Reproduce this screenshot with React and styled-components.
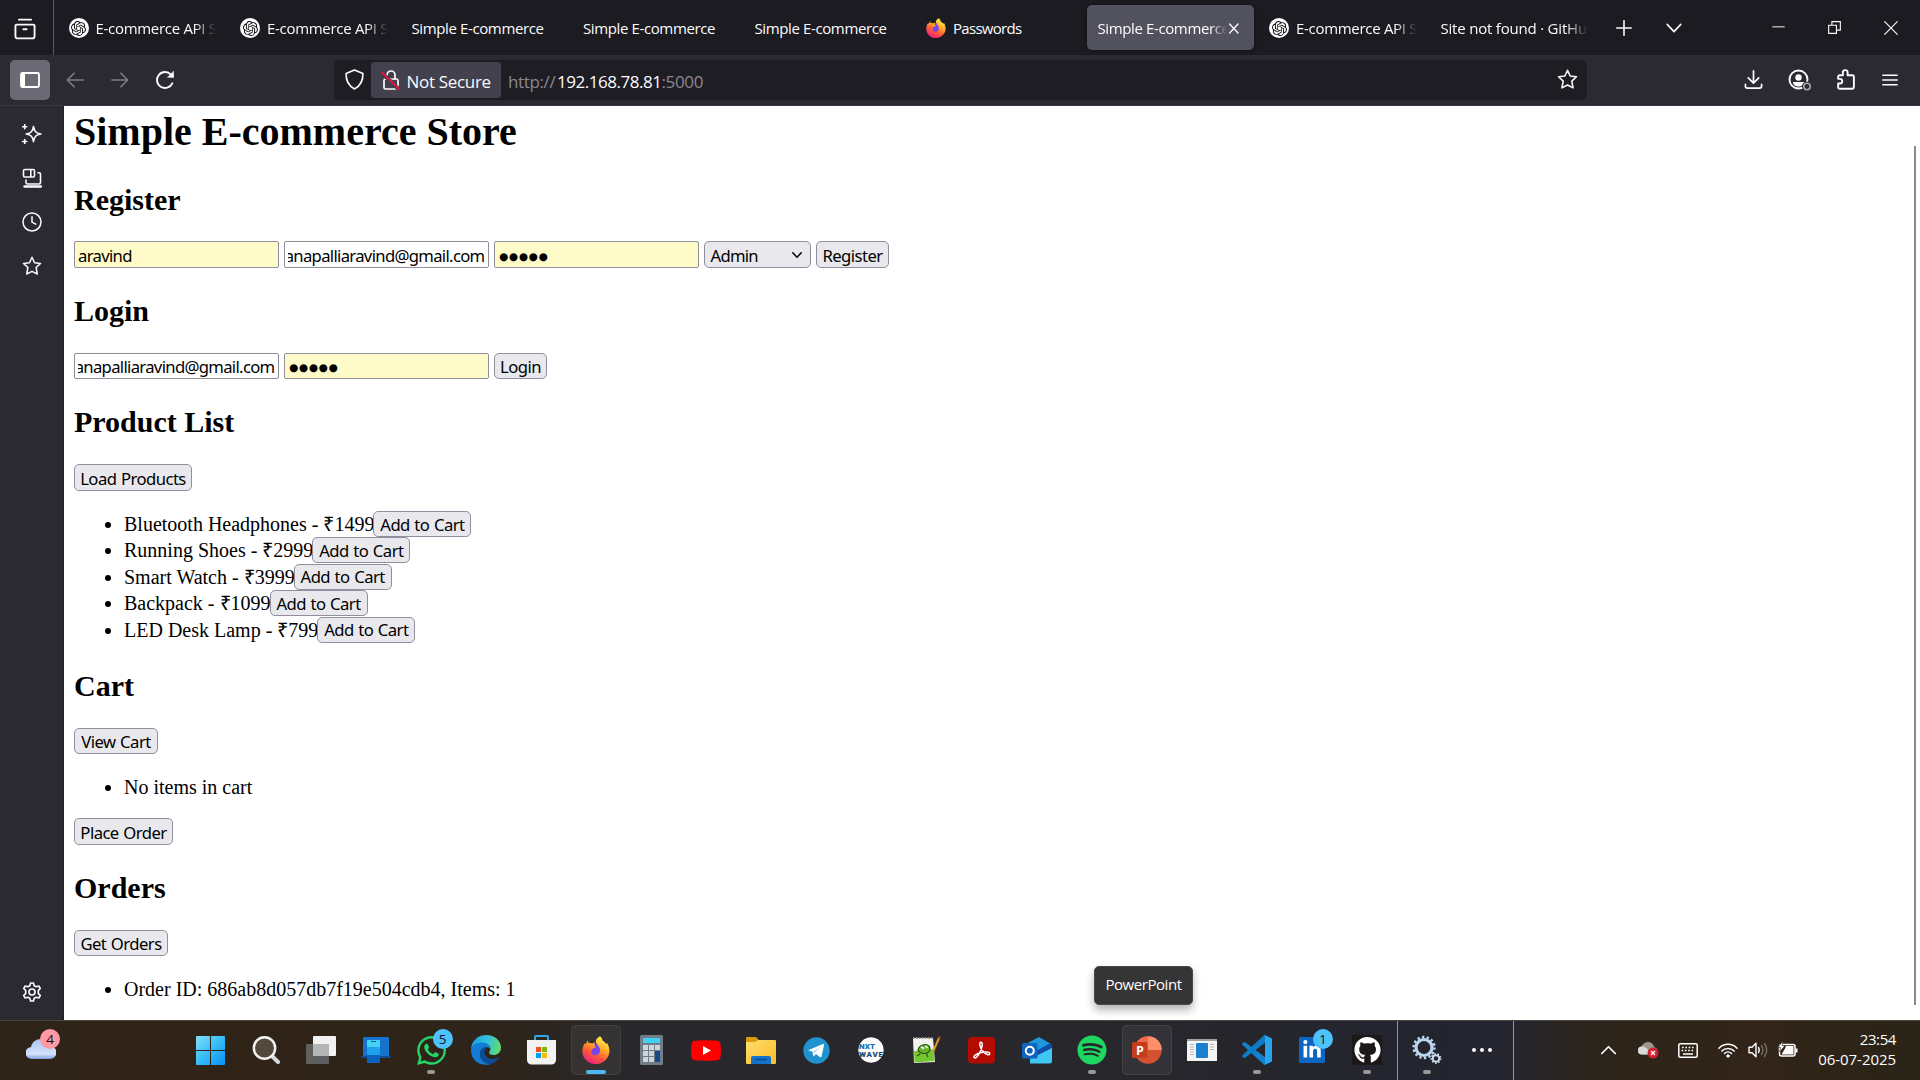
import React from "react";
import styled, { createGlobalStyle, css } from "styled-components";
import { SiOpenai } from "react-icons/si";
import { FaWhatsapp, FaSpotify, FaGithub, FaLinkedinIn } from "react-icons/fa6";

const ui = `"Open Sans", "Noto Sans", sans-serif`;
const control = `"Noto Sans", "Open Sans", sans-serif`;

const GlobalStyle = createGlobalStyle`
  * { box-sizing: border-box; }
  html, body { margin: 0; padding: 0; overflow: hidden; background: #fff; }
  svg { display: block; flex: none; }
`;

const Screen = styled.div`
  width: 1920px;
  height: 1080px;
  display: flex;
  flex-direction: column;
  overflow: hidden;
`;

/* ---------- tab strip ---------- */
const TabStrip = styled.header`
  height: 55px;
  display: flex;
  background: #1c1b22;
  color: #fbfbfe;
  font-family: ${ui};
`;
const FirefoxView = styled.div`
  width: 54px;
  display: grid;
  place-items: center;
  padding: 2px 4px 0 0;
  border-right: 1px solid #5b5a63;
  margin-right: 1.5px;
`;
const TabSlot = styled.div`
  width: 171.5px;
  padding: 5px 2px;
`;
const TabBody = styled.div`
  height: 45px;
  display: flex;
  align-items: center;
  gap: ${(p) => (p.$active ? 0 : 7)}px;
  padding: 1px ${(p) => (p.$active ? 14 : 9)}px 0 11px;
  border-radius: 5px;
  ${(p) => p.$active && css`
    background: #52525e;
    box-shadow: 0 0 4px rgba(0, 0, 0, 0.5);
  `}
`;
const TabTitle = styled.span`
  flex: 1;
  min-width: 0;
  overflow: hidden;
  white-space: nowrap;
  font-size: 15px;
  line-height: 22px;
  letter-spacing: ${(p) => p.$track || "-0.38px"};
  ${(p) => p.$fade && css`
    mask-image: linear-gradient(to right, #000 calc(100% - ${p.$fade}px), transparent);
  `}
`;
const GptBadge = styled.span`
  width: 20px;
  height: 20px;
  flex: none;
  border-radius: 50%;
  display: grid;
  place-items: center;
  background: #fff;
  color: #111;
`;
const StripButton = styled.div`
  width: ${(p) => p.$w}px;
  margin-left: ${(p) => p.$gap || 0}px;
  display: grid;
  place-items: center;
`;

/* ---------- toolbar ---------- */
const Toolbar = styled.nav`
  height: 51px;
  display: flex;
  align-items: center;
  padding: 0 8px 1px 10px;
  background: #2b2a33;
  color: #fbfbfe;
  font-family: ${ui};
  border-bottom: 1px solid #38373f;
`;
const SidebarToggle = styled.div`
  width: 40px;
  height: 40px;
  border-radius: 5px;
  background: #6b6a74;
  display: grid;
  place-items: center;
  margin-right: 2.5px;
`;
const ToolButton = styled.div`
  width: ${(p) => p.$w || 45}px;
  display: grid;
  place-items: center;
  color: ${(p) => (p.$dim ? "#7f7e86" : "#fbfbfe")};
`;
const AddressBar = styled.div`
  width: 1253px;
  height: 40px;
  margin: 0 auto 0 146.5px;
  border-radius: 5px;
  background: #1e1d24;
  display: flex;
  align-items: center;
  padding: 0 9.5px 0 9.5px;
`;
const Security = styled.div`
  width: 130px;
  height: 36px;
  margin: 0 7.5px 0 6px;
  padding: 0 0 0 10px;
  border-radius: 4px;
  background: #42414d;
  display: flex;
  align-items: center;
  gap: 6px;
  font-size: 17px;
  white-space: nowrap;
  letter-spacing: -0.32px;
`;
const SecurityText = styled.span`
  padding-top: 4px;
`;
const Url = styled.span`
  flex: 1;
  padding-top: 3px;
  font-size: 17px;
  letter-spacing: -0.36px;
  color: #8a8991;
  b { font-weight: 400; color: #fbfbfe; margin-left: 1.500px; letter-spacing: -0.46px; }
`;

/* ---------- body ---------- */
const Middle = styled.div`
  height: 914px;
  display: flex;
`;
const Sidebar = styled.aside`
  width: 64px;
  background: #2b2a33;
  border-right: 1px solid #211f26;
  display: flex;
  flex-direction: column;
  align-items: center;
  padding: 6px 0 6px 1px;
  color: #fbfbfe;
`;
const SideItem = styled.div`
  height: 44px;
  width: 44px;
  display: grid;
  place-items: center;
  ${(p) => p.$last && "margin-top: auto;"}
`;
const Page = styled.main`
  flex: 1;
  background: #fff;
  color: #000;
  padding: 3px 0 0 10px;
  font-family: "Liberation Serif", serif;
  font-size: 20px;
`;
const ScrollTrack = styled.div`
  width: 6px;
  background: #fff;
  padding-top: 40px;
`;
const ScrollThumb = styled.div`
  width: 2px;
  height: 859px;
  background: #8a8a8a;
`;
const Title = styled.h1`
  margin: 0 0 29px;
  font-size: 40px;
  line-height: 45px;
`;
const Section = styled.section`
  height: ${(p) => p.$h}px;
`;
const Heading = styled.h2`
  margin: 0 0 ${(p) => p.$mb || 25}px;
  font-size: 30px;
  line-height: 34px;
`;
const Row = styled.div`
  display: flex;
  gap: 5px;
  height: ${(p) => p.$h || 26}px;
  margin-top: ${(p) => p.$mt || 0}px;
`;
const Field = styled.div`
  width: 205px;
  border: 1px solid #8f8f9d;
  border-radius: 2px;
  background: ${(p) => (p.$filled ? "#fffbc8" : "#fff")};
  padding: 0 3.5px 0 3px;
  display: flex;
  align-items: center;
`;
const FieldText = styled.div`
  flex: 1;
  height: 24px;
  overflow: hidden;
  display: flex;
  justify-content: ${(p) => (p.$end ? "flex-end" : "flex-start")};
  font: 16.67px/25px ${control};
  letter-spacing: -0.68px;
  white-space: nowrap;
`;
const Dots = styled.div`
  font: 10.5px/24px "DejaVu Sans", sans-serif;
  letter-spacing: 0.7px;
  padding: 2px 0 0 1px;
`;
const Button = styled.button`
  width: ${(p) => p.$w}px;
  height: ${(p) => p.$h || 26}px;
  flex: none;
  margin: 0 0 0 ${(p) => p.$ml || 0}px;
  padding: ${(p) => (p.$h === 27 ? 2 : 0.5)}px 0 0 0;
  border: 1px solid #8f8f9d;
  border-radius: 5px;
  background: #e9e9ed;
  color: #000;
  font: 16.67px/24px ${control};
  letter-spacing: -0.55px;
  word-spacing: 0.8px;
  white-space: nowrap;
  text-align: center;
`;
const Select = styled.div`
  width: 107px;
  border: 1px solid #8f8f9d;
  border-radius: 5px;
  background: #e9e9ed;
  padding: 2px 8px 0 5.5px;
  display: flex;
  align-items: center;
  justify-content: space-between;
  font: 16.67px/24px ${control};
  letter-spacing: -0.75px;
`;
const SelectArrow = styled.span`
  margin-top: -2px;
`;
const List = styled.ul`
  margin: ${(p) => p.$mt}px 0 0;
  padding: 0 0 0 50px;
`;
const Item = styled.li`
  height: 23px;
  line-height: 23px;
`;
const ProductItem = styled.li`
  height: 26.4px;
  line-height: 27.4px;
`;
const ProductLine = styled.div`
  height: 26.4px;
  display: flex;
  align-items: flex-start;
  white-space: pre;
`;

/* ---------- taskbar ---------- */
const Taskbar = styled.footer`
  position: relative;
  height: 60px;
  display: flex;
  border-top: 1px solid #4a463f;
  background: linear-gradient(to right, #2f2419 0, #302318 150px, #2f2419 480px, #2b2622 560px, #28272b 640px, #28282c 900px, #27262c 1200px, #22242f 1450px, #262630 1515px, #2a2521 1560px, #2d2419 1620px, #322418 1760px, #2b2418 1920px);
  color: #fff;
  font-family: ${ui};
`;
const Weather = styled.div`
  position: relative;
  width: 183.4px;
  padding: 18px 0 0 26px;
`;
const Slot = styled.div`
  position: relative;
  width: 55.05px;
  height: 50px;
  margin-top: 4px;
  display: grid;
  place-items: center;
  ${(p) => p.$lit && css`
    &::before {
      content: "";
      position: absolute;
      inset: 0 2.5px;
      border-radius: 5px;
      border: 1px solid rgba(255, 255, 255, 0.07);
      background: rgba(255, 255, 255, 0.06);
    }
  `}
  & > svg { position: relative; }
`;
const Running = styled.span`
  position: absolute;
  bottom: 1px;
  left: 50%;
  transform: translateX(-50%);
  width: ${(p) => (p.$focus ? 20 : 8)}px;
  height: 4px;
  border-radius: 2px;
  background: ${(p) => (p.$focus ? "#4cb8f5" : "#9a9894")};
`;
const Badge = styled.span`
  position: absolute;
  left: ${(p) => p.$x}px;
  top: ${(p) => p.$y}px;
  width: 20px;
  height: 20px;
  border-radius: 50%;
  background: ${(p) => p.$color};
  color: #111;
  font-size: 13.5px;
  line-height: 20px;
  text-align: center;
`;
const Divider = styled.div`
  width: 1px;
  background: #96969a;
  margin: 0 ${(p) => p.$mr || 0}px 0 3px;
`;
const Tray = styled.div`
  flex: 1;
  display: flex;
  align-items: center;
  padding-left: 74px;
`;
const TrayItem = styled.div`
  width: ${(p) => p.$w || 40}px;
  display: grid;
  place-items: center;
  padding-bottom: 1px;
`;
const Clock = styled.div`
  margin-left: auto;
  padding: 0 24px 3px 0;
  text-align: right;
  font-size: 15px;
  line-height: 20px;
`;
const ClockLine = styled.div`
  letter-spacing: ${(p) => p.$track};
`;
const Tooltip = styled.div`
  position: absolute;
  left: 1094px;
  top: -55px;
  width: 99px;
  height: 39px;
  border-radius: 5px;
  border: 1px solid #4a4a4a;
  background: #353535;
  box-shadow: 0 5px 8px rgba(0, 0, 0, 0.3);
  font-size: 15px;
  line-height: 35px;
  letter-spacing: -0.45px;
  text-align: center;
`;

/* ---------- drawings ---------- */
const Line = ({ s = 20, w = 1.5, children, ...r }) => (
  <svg width={s} height={s} viewBox="0 0 20 20" fill="none" stroke="currentColor" strokeWidth={w} strokeLinecap="round" strokeLinejoin="round" {...r}>{children}</svg>
);
const Star = ({ s = 20 }) => (
  <Line s={s} w={1.5}><path d="M10 1.2l2.5 5.5 6 .7-4.4 4.1 1.2 6.5L10 15.3 4.7 18l1.2-6.5L1.500 7.4l6-.7z" /></Line>
);
const Firefox = ({ s }) => (
  <svg width={s} height={s} viewBox="0 0 28 28">
    <defs>
      <linearGradient id={`ff${s}`} x1=".8" y1=".05" x2=".3" y2="1"><stop offset="0" stopColor="#fff34f" /><stop offset=".35" stopColor="#ffb02a" /><stop offset=".65" stopColor="#ff5a36" /><stop offset="1" stopColor="#f01c84" /></linearGradient>
    </defs>
    <circle cx="14" cy="14.500" r="7" fill="#7a45e8" />
    <path fill={`url(#ff${s})`} d="M18 .3c1.700 1.300 2.300 3 2.600 4.500 1.500.6 2.800 2 3.400 3.100l1.200-.9c2.300 4.500 3.800 10-.4 15.500C19.500 29.700 8.700 30 3.300 23.300-.8 18-.5 11.300 3.300 6.500l.3 2.100 2.200-4.300.8 3c1.500-.5 2.700-.3 4 .3l2.100-1.300-.3 3.400 1.700 1.200-2.700 1.500c-2.800 1.200-3 5-.4 6.400 3 1.600 7.100-.4 7.100-4.200 0-3.200-2.600-5.400-4-7.800C12.800 4.300 15.500 1.500 18 .3z" />
  </svg>
);

function Tab({ icon, title, active, fade, track }) {
  return (
    <TabSlot>
      <TabBody $active={active}>
        {icon === "gpt" && <GptBadge><SiOpenai size={15} /></GptBadge>}
        {icon === "firefox" && <Firefox s={20} />}
        <TabTitle $fade={fade} $track={track}>{title}</TabTitle>
        {active && <Line s={13} w={2}><path d="M4 3l13 14M17 3L4 17" /></Line>}
      </TabBody>
    </TabSlot>
  );
}

const products = [
  "Bluetooth Headphones - ₹1499",
  "Running Shoes - ₹2999",
  "Smart Watch - ₹3999",
  "Backpack - ₹1099",
  "LED Desk Lamp - ₹799",
];

const WindowsIcon = () => (
  <svg width="29" height="29" viewBox="0 0 29 29">
    <defs><linearGradient id="win" x1="0" y1="0" x2="1" y2="1"><stop offset="0" stopColor="#86dcfb" /><stop offset=".5" stopColor="#35bdf7" /><stop offset="1" stopColor="#0a8df5" /></linearGradient></defs>
    <path fill="url(#win)" d="M0 1a1 1 0 011-1h13v14H0zM15 0h13a1 1 0 011 1v13H15zM0 15h14v14H1a1 1 0 01-1-1zM15 15h14v13a1 1 0 01-1 1H15z" />
  </svg>
);
const SearchIcon = () => (
  <svg width="28" height="28" viewBox="0 0 28 28">
    <path d="M19 19l7 7" stroke="#d3d8dd" strokeWidth="4" strokeLinecap="round" />
    <circle cx="12.500" cy="12" r="10.700" fill="#55493c" stroke="#f3f3f3" strokeWidth="2.400" />
  </svg>
);
const TaskViewIcon = () => (
  <svg width="30" height="28" viewBox="0 0 30 28">
    <rect x="7" y="0" width="23" height="20" rx="1" fill="#f1f1f1" />
    <rect x="0" y="8" width="23" height="20" rx="1" fill="#5f5f5f" />
    <path d="M7 8h16v12H7z" fill="#b5b5b5" />
  </svg>
);
const PhoneLinkIcon = () => (
  <svg width="30" height="27" viewBox="0 0 30 27">
    <rect x="2" y="0" width="26" height="20" rx="1" fill="#1474cd" />
    <path d="M0 19h30l-1 2H1z" fill="#0c4f97" />
    <rect x="6" y="3" width="13" height="23" rx="1" fill="#1ba2ea" />
    <path d="M6 4a1 1 0 011-1h11a1 1 0 011 1v6H6z" fill="#43d2f4" />
    <path d="M6 18h13v7a1 1 0 01-1 1H7a1 1 0 01-1-1z" fill="#0b62bb" />
    <path d="M10 4.500h5" stroke="#0b5da0" />
  </svg>
);
const EdgeIcon = () => (
  <svg width="30" height="30" viewBox="0 0 30 30">
    <defs>
      <linearGradient id="edge" x1="0" y1=".35" x2="1" y2=".5"><stop offset="0" stopColor="#1b9fe0" /><stop offset=".55" stopColor="#35c1d8" /><stop offset="1" stopColor="#62dc68" /></linearGradient>
    </defs>
    <path d="M0 15C0 6 7 0 15 0c9 0 15 6 15 12.500 0 5-3.800 7.500-7.500 7.500-3 0-4.500-1.200-4.500-2.200 0-.8 1.300-1.500 1.300-3.800 0-3-2.800-5.500-7-5.500C6 8.500 0 11 0 15z" fill="url(#edge)" />
    <path d="M0 15C.3 10.500 5 7.500 11 7.600c5 0 8.300 3 8.300 6-1.200-1-2.800-1.600-4.500-1.400C11 12.500 9 16 9.600 19.500c.8 5 5 9 10.400 9.400C12 32 0 27.500 0 15z" fill="#127bd3" />
    <path d="M14.800 12.200C10.500 12.500 8 16.500 9 21c1 4.800 5.500 8.500 11 8 3.500-1.200 6.200-3.500 7.600-6 .3-.6-.2-.8-.7-.5-6.200 3.200-12.700.3-13.300-4.500-.3-2.300.3-4.500 1.200-5.800z" fill="#0c4c94" />
  </svg>
);
const StoreIcon = () => (
  <svg width="29" height="30" viewBox="0 0 29 30">
    <path d="M8 6V2a1 1 0 011-1h11a1 1 0 011 1v4" fill="none" stroke="#2aa9e8" strokeWidth="2" />
    <path d="M0 5h29v20a4.500 4.500 0 01-4.500 4.500h-20A4.500 4.500 0 010 25z" fill="#f2f2f2" />
    <path fill="#f25022" d="M9 12h5v5H9z" /><path fill="#7fba00" d="M15 12h5v5h-5z" /><path fill="#00a4ef" d="M9 18h5v5H9z" /><path fill="#ffb900" d="M15 18h5v5h-5z" />
  </svg>
);
const CalcIcon = () => (
  <svg width="23" height="30" viewBox="0 0 23 30">
    <rect width="23" height="30" rx="1.500" fill="#707c87" />
    <rect x="3" y="3" width="17" height="5" fill="#3fd0f2" />
    <path fill="#cdd5db" d="M3 10h5v5H3zM9 10h5v5H9zM15 10h5v5h-5zM3 16h5v5H3zM9 16h5v5H9zM3 22h5v5H3zM9 22h5v5H9z" />
    <path fill="#174a85" d="M15 16h5v11h-5z" />
  </svg>
);
const YoutubeIcon = () => (
  <svg width="30" height="21" viewBox="0 0 30 21">
    <path fill="#f00" d="M4 .7C10 0 20 0 26 .7c2.500.3 3.300 1.500 3.500 3.300.6 4 .6 9 0 13-.3 2-1.300 3-3.500 3.300-6 .8-16 .8-22 0C1.800 20 .8 19 .5 17 0 13 0 8 .5 4 .8 2 1.800 1 4 .7z" />
    <path fill="#fff" d="M12 6l8 4.500-8 4.500z" />
  </svg>
);
const FolderIcon = () => (
  <svg width="30" height="27" viewBox="0 0 30 27">
    <defs><linearGradient id="fold" x1="0" y1="0" x2="1" y2="1"><stop offset="0" stopColor="#ffdc6e" /><stop offset="1" stopColor="#f9be28" /></linearGradient></defs>
    <path d="M0 1a1 1 0 011-1h9l3 3-3 4H0z" fill="#dc9a10" />
    <path d="M0 5h9l3-2h17a1 1 0 011 1v22a1 1 0 01-1 1H1a1 1 0 01-1-1z" fill="url(#fold)" />
    <path d="M5 27v-6a2 2 0 012-2h16a2 2 0 012 2v6z" fill="#1273c8" />
    <path d="M9 22.500h12" stroke="#0a4a92" strokeWidth="1.500" />
  </svg>
);
const TelegramIcon = () => (
  <svg width="27" height="27" viewBox="0 0 27 27">
    <circle cx="13.500" cy="13.500" r="13.200" fill="#1f93d0" />
    <path fill="#fff" d="M5 13.200L20 7c1-.3 1.300.2 1 1.300l-2.500 11c-.2 1-.9 1.100-1.700.6L13 17l-2 2c-.6.500-.8.300-.9-.4l-.6-3.800z" />
    <path d="M9.800 15l7.800-5.300-6.400 6.300z" fill="#a9cfe6" />
  </svg>
);
const NxtIcon = () => (
  <svg width="26" height="26" viewBox="0 0 26 26" fontFamily="Roboto, sans-serif" fontWeight="900">
    <defs><clipPath id="nxt"><circle cx="13" cy="13" r="12.700" /></clipPath></defs>
    <g clipPath="url(#nxt)">
      <circle cx="13" cy="13" r="13" fill="#fdfdfd" />
      <text x="1" y="12" fontSize="8" fill="#1671b8" textLength="16">NXT</text>
      <text x="1" y="20" fontSize="8" fill="#21486f" textLength="24">WAVE</text>
    </g>
  </svg>
);
const NotepadIcon = () => (
  <svg width="29" height="28" viewBox="0 0 29 28">
    <path d="M1 2h20l2 24-21 1z" fill="#f1f3ee" />
    <path d="M2 15l19.500-2 1 12-20 1.500z" fill="#75c731" />
    <path d="M1 2h20" stroke="#8c8c8c" strokeWidth="2" strokeDasharray="1.500 1.500" />
    <path d="M6 14c1-5 8-7 11-4 2 2 1 6-2 7-4 1-7 1-9-3zM8 18l-3 2M14 17l2 4" fill="#6bb52b" stroke="#244b12" strokeWidth="1.100" />
    <path d="M9 11l3 1.500M13.500 10l2 2" stroke="#fff" strokeWidth="1.500" />
    <path d="M27 2l-6 14" stroke="#e0992b" strokeWidth="2" /><path d="M28 .5l-1 2" stroke="#b33c2e" strokeWidth="2" />
  </svg>
);
const AcrobatIcon = () => (
  <svg width="27" height="27" viewBox="0 0 27 27">
    <rect width="27" height="26.500" rx="4" fill="#b30b00" />
    <path d="M12.500 5.300c1.700-.4 2 1.700 1.500 4-.8 3.800-3.300 8.700-5.700 11-1.500 1.200-3.200.2-2-1.400 2-2.300 7.500-4 11.500-4 2.800 0 4.300.8 3.900 2-.6 1.500-3.500.5-5.700-1.500-2.300-2-3.800-5.200-4.200-7.600-.2-1.300 0-2.200.7-2.500z" fill="none" stroke="#fff" strokeWidth="1.500" />
  </svg>
);
const OutlookIcon = () => (
  <svg width="30" height="27" viewBox="0 0 30 27">
    <path d="M4 7L17 0l12 7v8L8 22z" fill="#1f97dd" />
    <path d="M14 14L28.500 6l1.500 1.500v5L15 21z" fill="#0b4da8" />
    <path d="M8 22L30 11v13a2.500 2.500 0 01-2.500 2.500H8z" fill="#3fc6f5" />
    <rect x="0" y="6" width="15.500" height="15.500" rx="1.500" fill="#0f64bf" />
    <circle cx="7.800" cy="13.700" r="4" fill="none" stroke="#fff" strokeWidth="2" />
  </svg>
);
const PowerPointIcon = () => (
  <svg width="30" height="28" viewBox="0 0 30 28">
    <circle cx="16" cy="14" r="13.700" fill="#d35230" />
    <path d="M16 .3A13.700 13.700 0 0129.700 14H16z" fill="#ff8f6b" />
    <path d="M16 .3V14H2.300A13.700 13.700 0 0116 .3z" fill="#ed6c47" />
    <rect x="0" y="6" width="15.500" height="16" rx="1.500" fill="#c43e1c" />
    <text x="4" y="18.500" fontFamily="Open Sans, sans-serif" fontWeight="700" fontSize="12.500" fill="#fff">P</text>
  </svg>
);
const AppWindowIcon = () => (
  <svg width="30" height="22" viewBox="0 0 30 22">
    <rect width="30" height="22" fill="#f4f4f4" /><path d="M0 0h30v2H0z" fill="#9ea3a6" />
    <rect x="9" y="4" width="12" height="15" rx="1" fill="#1a80d0" />
    <path d="M3 5.500h4M3 8h4M3 10.500h4M3 13h4M3 15.500h4M23 5.500h4M23 8h4M23 10.500h4" stroke="#b5b5b5" />
  </svg>
);
const VsCodeIcon = () => (
  <svg width="30" height="30" viewBox="0 0 30 30">
    <path d="M.3 9.800c-.4-.4-.4-.9 0-1.300l1.500-1.300c.4-.3.900-.3 1.300 0L23.200 22.300V29.500c-.6.300-1.200.1-1.700-.3z" fill="#1182c9" />
    <path d="M.3 20.200c-.4.400-.4.900 0 1.300l1.500 1.300c.4.300.9.300 1.300 0L23.200 7.700V.5c-.6-.3-1.200-.1-1.700.3z" fill="#0e7cc4" />
    <path d="M21.700.2c.4-.2.900-.2 1.300 0l6 2.900c.6.300 1 .8 1 1.500v20.800c0 .7-.4 1.200-1 1.500l-6 2.900c-.4.200-.9.200-1.300 0 .8-.2 1.300-.7 1.300-1.500V1.700c0-.8-.5-1.300-1.300-1.500z" fill="#2ba3ee" />
  </svg>
);
const LinkedInIcon = () => (
  <svg width="26" height="26" viewBox="0 0 26 26">
    <rect width="26" height="26" rx="1.500" fill="#0a66c2" />
    <FaLinkedinIn x="3" y="3" size={20} color="#fff" />
  </svg>
);
const GithubIcon = () => (
  <svg width="30" height="30" viewBox="0 0 30 30">
    <rect width="30" height="30" fill="#1b1817" />
    <FaGithub x="2" y="1.500" size={27} color="#fff" />
  </svg>
);
const Gear = ({ cx, cy, r, w, teeth, tooth, c }) => {
  const ring = r + w * 0.75;
  const step = (2 * Math.PI * ring) / teeth;
  return (
    <g stroke={c} fill="none">
      <circle cx={cx} cy={cy} r={r} strokeWidth={w} />
      <circle cx={cx} cy={cy} r={ring} strokeWidth={tooth} strokeDasharray={`${step / 2} ${step / 2}`} />
    </g>
  );
};
const GearsIcon = () => (
  <svg width="30" height="30" viewBox="0 0 30 30">
    <Gear cx={12} cy={12.500} r={8} w={3.2} teeth={14} tooth={2.600} c="#b9d6ec" />
    <Gear cx={24} cy={23.500} r={3.2} w={1.800} teeth={9} tooth={1.800} c="#cfe0ee" />
  </svg>
);

const pinned = [
  { icon: <WindowsIcon /> },
  { icon: <SearchIcon /> },
  { icon: <TaskViewIcon /> },
  { icon: <PhoneLinkIcon /> },
  { icon: <FaWhatsapp size={33} color="#25d366" />, running: true, badge: "5", badgeX: 29 },
  { icon: <EdgeIcon /> },
  { icon: <StoreIcon /> },
  { icon: <Firefox s={28} />, running: true, focus: true, lit: true },
  { icon: <CalcIcon /> },
  { icon: <YoutubeIcon /> },
  { icon: <FolderIcon /> },
  { icon: <TelegramIcon /> },
  { icon: <NxtIcon /> },
  { icon: <NotepadIcon /> },
  { icon: <AcrobatIcon /> },
  { icon: <OutlookIcon /> },
  { icon: <FaSpotify size={30} color="#1ed760" />, running: true },
  { icon: <PowerPointIcon />, lit: true },
  { icon: <AppWindowIcon /> },
  { icon: <VsCodeIcon />, running: true },
  { icon: <LinkedInIcon />, badge: "1", badgeX: 28.5 },
  { icon: <GithubIcon />, running: true },
];

export default function App() {
  return (
    <Screen>
      <GlobalStyle />
      <TabStrip>
        <FirefoxView>
          <Line s={22} w={1.7}><path d="M4.500 1.500h11M2.500 6h15a1.200 1.200 0 011.200 1.200v9.300a2 2 0 01-2 2H3.300a2 2 0 01-2-2V7.200A1.200 1.200 0 012.500 6zM8.500 10.200h3" /></Line>
        </FirefoxView>
        <Tab icon="gpt" title="E-commerce API S" fade={22} track="-0.3px" />
        <Tab icon="gpt" title="E-commerce API S" fade={22} track="-0.3px" />
        <Tab title="Simple E-commerce" />
        <Tab title="Simple E-commerce" />
        <Tab title="Simple E-commerce" />
        <Tab icon="firefox" title="Passwords" track="-0.7px" />
        <Tab title="Simple E-commerce" active fade={16} />
        <Tab icon="gpt" title="E-commerce API S" fade={22} track="-0.3px" />
        <Tab title="Site not found · GitHub" fade={22} track="-0.2px" />
        <StripButton $w={49}><Line s={16} w={2}><path d="M10 1v18M1 10h18" /></Line></StripButton>
        <StripButton $w={51}><Line s={16} w={2}><path d="M1.500 5.500l8.500 9 8.500-9" /></Line></StripButton>
        <StripButton $w={56} $gap={51}><Line s={13} w={1.500}><path d="M1 9h18" /></Line></StripButton>
        <StripButton $w={57}><Line s={13} w={1.700} strokeLinejoin="miter"><path d="M1 6.500h12V19H1zM6 6V1h13v13h-5.500" /></Line></StripButton>
        <StripButton $w={56}><Line s={14} w={1.600}><path d="M1 1l18 18M19 1L1 19" /></Line></StripButton>
      </TabStrip>

      <Toolbar>
        <SidebarToggle>
          <svg width="20" height="16" viewBox="0 0 20 16"><rect x="1" y="1" width="18" height="14" rx="1.500" fill="none" stroke="#fff" strokeWidth="1.800" /><path d="M1 1h4v14H1z" fill="#fff" /></svg>
        </SidebarToggle>
        <ToolButton $dim><Line s={18} w={1.800}><path d="M19 10H1.500M9 2.500L1.500 10 9 17.500" /></Line></ToolButton>
        <ToolButton $dim><Line s={18} w={1.800}><path d="M1 10h17.500M11 2.500l7.500 7.500-7.500 7.500" /></Line></ToolButton>
        <ToolButton><Line s={20} w={1.900}><path d="M17.300 13.300A8 8 0 1116 4.700l2 2" /><path d="M12.800 7.300h5.700V1.600z" fill="currentColor" strokeWidth=".6" /></Line></ToolButton>
        <AddressBar>
          <Line s={21} w={1.600}><path d="M10 1l8 3.300c.2 6-1.500 11.300-8 14.700C3.500 15.600 1.800 10.300 2 4.300z" /></Line>
          <Security>
            <Line s={20} w={1.700}><rect x="3" y="9" width="14" height="10" rx="1.500" /><path d="M6 9V5a4 4 0 018 0v4" /><path d="M1 3l17 16.500" stroke="#42414d" strokeWidth="4" /><path d="M1 2.500l17 16.500" stroke="#e8143c" strokeWidth="1.800" /></Line>
            <SecurityText>Not Secure</SecurityText>
          </Security>
          <Url>http://<b>192.168.78.81</b>:5000</Url>
          <Star s={21} />
        </AddressBar>
        <ToolButton $w={45.5}><Line s={19} w={1.800}><path d="M10 1v12.500M4.500 8.300l5.500 5.500 5.500-5.500M1.500 15v2a2 2 0 002 2h13a2 2 0 002-2v-2" /></Line></ToolButton>
        <ToolButton $w={47.5}>
          <svg width="24" height="22" viewBox="0 0 24 22"><circle cx="10.500" cy="10.500" r="9" fill="none" stroke="#fbfbfe" strokeWidth="1.900" /><circle cx="10.500" cy="8.500" r="3.200" fill="#fbfbfe" /><path d="M5 13h11c0 2.500-2 4.500-5.500 4.500S5 15.500 5 13z" fill="#fbfbfe" /><circle cx="19" cy="17.500" r="5" fill="#2b2a33" /><circle cx="19" cy="17.500" r="3.200" fill="none" stroke="#a8a7ae" strokeWidth="1.600" /></svg>
        </ToolButton>
        <ToolButton $w={43.5}><Line s={21} w={1.800}><path d="M7.500 6V3.300a2.200 2.200 0 014.500 0V6h4.500A1.500 1.500 0 0118 7.500V17a1.800 1.800 0 01-1.800 1.800H4.500A1.500 1.500 0 013 17.300v-3.500h1.700a2.200 2.200 0 000-4.400H3V7.500A1.500 1.500 0 014.500 6z" /></Line></ToolButton>
        <ToolButton $w={44.5}><Line s={16} w={1.900}><path d="M1 4h18M1 10h18M1 16h18" /></Line></ToolButton>
      </Toolbar>

      <Middle>
        <Sidebar>
          <SideItem><Line s={20} w={1.600}><path d="M11.500 2.500c.8 5 2.300 6.500 7.300 7.500-5 1-6.500 2.500-7.300 7.700-.8-5.200-2.300-6.700-7.300-7.700 5-1 6.500-2.500 7.300-7.500zM2.700.7v4M.7 2.700h4M2.700 15.500v4M.7 17.500h4" /></Line></SideItem>
          <SideItem><Line s={20} w={1.600}><rect x="1.500" y="1.500" width="11" height="7.500" rx="1.300" /><path d="M8.800 2v6.500M4 12v2.500a1.500 1.500 0 001.500 1.500h11.500a1.500 1.500 0 001.500-1.500V6a1.300 1.300 0 00-1.300-1.300H16" /><path d="M2.500 18.500h16.500" strokeWidth="2.500" /></Line></SideItem>
          <SideItem><Line s={20} w={1.500}><circle cx="10" cy="10" r="9" /><path d="M10 4.800v5.400l3.800 2" /></Line></SideItem>
          <SideItem><Star /></SideItem>
          <SideItem $last><Line s={20} w={1.600}><circle cx="10" cy="10" r="3" /><path d="M8.600 1h2.800l.8 2.800 1.800 1 2.800-.8 1.500 2.400-2 2.100v2.900l2 2.200-1.500 2.400-2.800-.8-1.800 1-.8 2.800H8.600l-.8-2.800-1.800-1-2.800.8-1.500-2.400 2-2.200V8.500l-2-2.100L3.200 4l2.800.8 1.800-1z" /></Line></SideItem>
        </Sidebar>
        <Page>
          <Title>Simple E-commerce Store</Title>
          <Section $h={111}>
            <Heading $mb={24}>Register</Heading>
            <Row $h={27}>
              <Field $filled><FieldText>aravind</FieldText></Field>
              <Field><FieldText $end>anapalliaravind@gmail.com</FieldText></Field>
              <Field $filled><Dots>●●●●●</Dots></Field>
              <Select>Admin<SelectArrow><Line s={10} w={3}><path d="M1.500 5.500l8.500 9 8.500-9" /></Line></SelectArrow></Select>
              <Button $w={73} $h={27}>Register</Button>
            </Row>
          </Section>
          <Section $h={111}>
            <Heading>Login</Heading>
            <Row>
              <Field><FieldText $end>anapalliaravind@gmail.com</FieldText></Field>
              <Field $filled><Dots>●●●●●</Dots></Field>
              <Button $w={53}>Login</Button>
            </Row>
          </Section>
          <Section $h={264}>
            <Heading>Product List</Heading>
            <Row $h={27}><Button $w={118} $h={27}>Load Products</Button></Row>
            <List $mt={20}>
              {products.map((name) => (
                <ProductItem key={name}><ProductLine>{name}<Button $w={98} $ml={-1}>Add to Cart</Button></ProductLine></ProductItem>
              ))}
            </List>
          </Section>
          <Section $h={202}>
            <Heading>Cart</Heading>
            <Row><Button $w={84}>View Cart</Button></Row>
            <List $mt={22}><Item>No items in cart</Item></List>
            <Row $h={27} $mt={19}><Button $w={99} $h={27}>Place Order</Button></Row>
          </Section>
          <Section $h={130}>
            <Heading>Orders</Heading>
            <Row><Button $w={94}>Get Orders</Button></Row>
            <List $mt={22}><Item>Order ID: 686ab8d057db7f19e504cdb4, Items: 1</Item></List>
          </Section>
        </Page>
        <ScrollTrack><ScrollThumb /></ScrollTrack>
      </Middle>

      <Taskbar>
        <Weather>
          <svg width="30" height="21" viewBox="0 0 30 21">
            <defs><linearGradient id="cl" x1="0" y1="0" x2="0" y2="1"><stop offset="0" stopColor="#a9c4f2" /><stop offset=".75" stopColor="#d5e3fb" /><stop offset="1" stopColor="#7d9ee0" /></linearGradient></defs>
            <path d="M6 20a6 6 0 01-1-12C6 3 10 0 15 0c5 0 8 3 9 7a6.500 6.500 0 010 13z" fill="url(#cl)" />
          </svg>
          <Badge $x={40} $y={8} $color="#ff99a4">4</Badge>
        </Weather>
        {pinned.map((p, i) => (
          <Slot key={i} $lit={p.lit}>
            {p.icon}
            {p.running && <Running $focus={p.focus} />}
            {p.badge && <Badge $x={p.badgeX} $y={4} $color="#4cc2ff">{p.badge}</Badge>}
          </Slot>
        ))}
        <Divider $mr={1.5} />
        <Slot><GearsIcon /><Running /></Slot>
        <Slot><svg width="20" height="4" viewBox="0 0 20 4" fill="#fff"><circle cx="2" cy="2" r="2" /><circle cx="10" cy="2" r="2" /><circle cx="18" cy="2" r="2" /></svg></Slot>
        <Divider />
        <Tray>
          <TrayItem><Line s={15} w={2.300}><path d="M1 14l9-9 9 9" /></Line></TrayItem>
          <TrayItem>
            <svg width="21" height="18" viewBox="0 0 21 18"><path d="M4 13.500a4 4 0 01-.5-8C5 2 8 .5 11 1c3 .5 5 3 5.500 5.500 2 0 3 2 3 3.500 0 2-1 3.500-3 3.500z" fill="#9a9690" /><path d="M4 13.500a4 4 0 010-8c3 0 5 2 7 4v4z" fill="#dadada" /><circle cx="15" cy="12" r="5.500" fill="#d3202c" /><path d="M13 10l4 4M17 10l-4 4" stroke="#fff" strokeWidth="1.400" /></svg>
          </TrayItem>
          <TrayItem>
            <svg width="20" height="15" viewBox="0 0 20 15" fill="none" stroke="#fff"><rect x=".8" y=".8" width="18.400" height="13.400" rx="1.500" strokeWidth="1.500" /><path d="M4 4.500h13M3.500 7.500h13" strokeWidth="1.700" strokeDasharray="1.700 1.600" /><path d="M5 11h10" strokeWidth="1.500" /></svg>
          </TrayItem>
          <TrayItem>
            <svg width="20" height="16" viewBox="0 0 20 16" fill="none" stroke="#fff" strokeWidth="1.500" strokeLinecap="round"><path d="M1 6.200a12.500 12.500 0 0118 0M3.800 9a8.700 8.700 0 0112.400 0M6.500 11.500a5 5 0 017 0" /><circle cx="10" cy="14" r="1.300" fill="#fff" strokeWidth=".8" /></svg>
          </TrayItem>
          <TrayItem $w={20}>
            <svg width="20" height="18" viewBox="0 0 20 18" fill="none" stroke="#fff" strokeWidth="1.400" strokeLinecap="round" strokeLinejoin="round"><path d="M1 6.300h3l4-4v13.400l-4-4H1z" /><path d="M10.500 6.500q1.600 2.500 0 5" /><path d="M13.500 4.500q3 4.500 0 9M16.500 2.500q4.500 6.500 0 13" stroke="#77706a" /></svg>
          </TrayItem>
          <TrayItem $w={40}>
            <svg width="20" height="18" viewBox="0 0 20 18"><rect x="1.500" y="3.500" width="15.500" height="11.500" rx="2" fill="none" stroke="#fff" strokeWidth="1.500" /><path d="M3.500 13.500l3.500-6 1-2.500h7.500v8.500zM17.500 7.500h2v4h-2z" fill="#fff" /><path d="M5 0L0 6.500h2.500L1.500 11 7 4.500H4.300z" fill="#fff" stroke="#2d2419" strokeWidth=".6" /></svg>
          </TrayItem>
          <Clock>
            <ClockLine $track="-0.4px">23:54</ClockLine>
            <ClockLine $track="-0.05px">06-07-2025</ClockLine>
          </Clock>
        </Tray>
        <Tooltip>PowerPoint</Tooltip>
      </Taskbar>
    </Screen>
  );
}
